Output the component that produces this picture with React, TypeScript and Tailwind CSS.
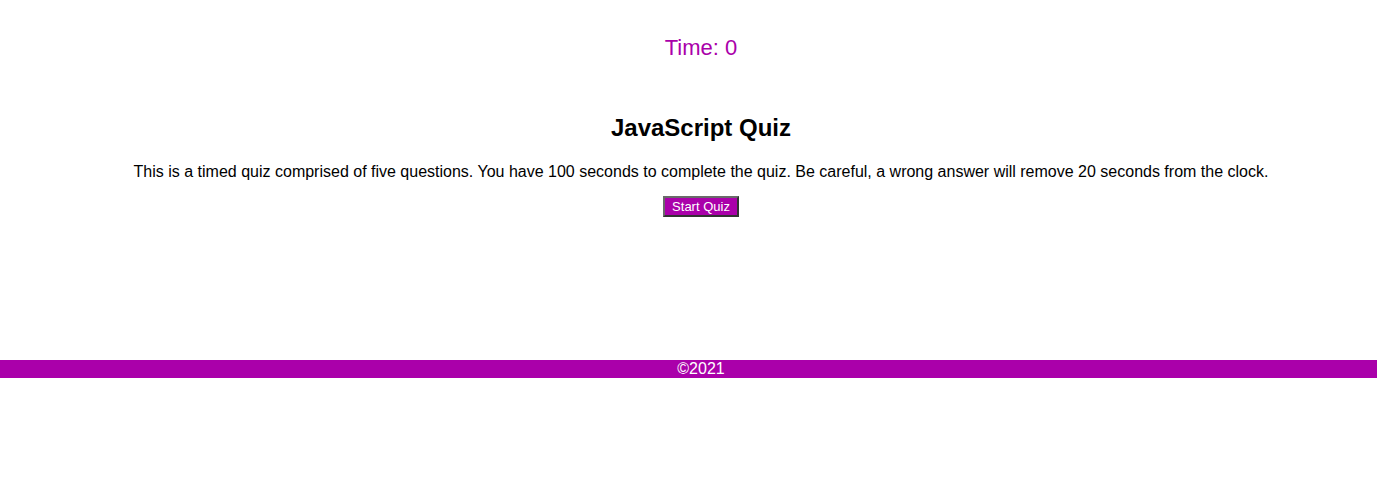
export default function App() {
  return (
    <div className="min-h-[487px] bg-white text-black font-['Liberation_Sans',Arial,sans-serif]">
      <header className="pt-[35px] pl-[25px] text-center">
        <p className="text-[22px] leading-[26px] text-[#aa00aa]">Time: 0</p>
      </header>

      <main className="mt-[53px] h-[246px] pl-[25px] text-center">
        <h1 className="text-[24px] leading-[28px] font-bold">JavaScript Quiz</h1>
        <p className="mt-[21px] text-[16px] leading-[18px]">
          This is a timed quiz comprised of five questions. You have 100 seconds to complete the quiz. Be careful, a wrong answer will remove 20 seconds from the clock.
        </p>
        <button className="mt-[15px] h-[21px] px-[7px] text-[13px] leading-[15px] text-white bg-[#aa00aa] border-2 border-t-[#6a6a6a] border-l-[#6a6a6a] border-r-[#333333] border-b-[#333333]">
          Start Quiz
        </button>
      </main>

      <footer className="h-[18px] pl-[25px] bg-[#aa00aa] text-center text-white text-[16px] leading-[18px]">
        ©2021
      </footer>
    </div>
  );
}
